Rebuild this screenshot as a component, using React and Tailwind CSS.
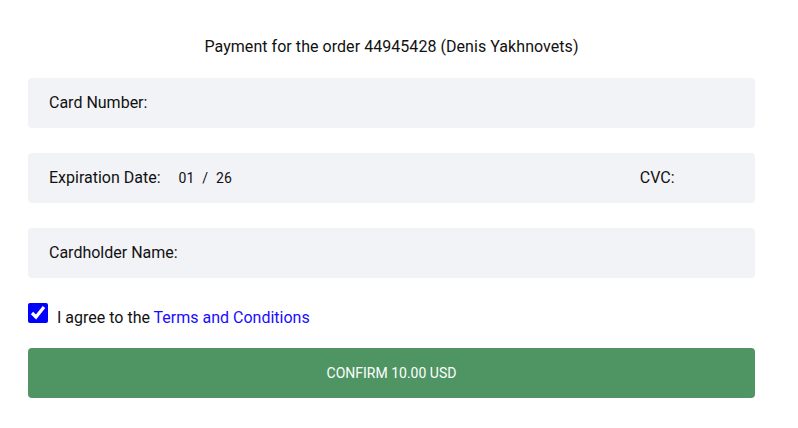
export default function App() {
  return (
    <div className="min-h-screen bg-white font-['Roboto',sans-serif] text-[#111]">
      <div className="ml-[28px] w-[727px] pt-[36px]">
        {/* Title */}
        <h1 className="text-center text-base leading-[22px] tracking-[0.05px]">
          Payment for the order 44945428 (Denis Yakhnovets)
        </h1>

        {/* Fields */}
        <div className="mt-[20px] flex flex-col gap-[25px]">
          <div className="flex h-[50px] items-center rounded bg-[#f2f3f7] pl-[21px] text-base">
            Card Number:
          </div>
          <div className="flex h-[50px] items-center rounded bg-[#f2f3f7] pl-[21px] text-base">
            <span>Expiration Date:</span>
            <span className="ml-[18px] text-sm">01</span>
            <span className="ml-[8px] text-sm">/</span>
            <span className="ml-[8px] text-sm">26</span>
            <span className="ml-[408px]">CVC:</span>
          </div>
          <div className="flex h-[50px] items-center rounded bg-[#f2f3f7] pl-[21px] text-base">
            Cardholder Name:
          </div>
        </div>

        {/* Terms */}
        <label className="mt-[25px] flex items-start text-base">
          <input
            type="checkbox"
            defaultChecked
            className="m-0 h-5 w-5 accent-[#0000ff]"
          />
          <span className="ml-[9px] mt-[3px] leading-[24px]">
            I agree to the{" "}
            <a href="#" className="text-[#1a0dff]">
              Terms and Conditions
            </a>
          </span>
        </label>

        {/* Button */}
        <button className="mt-[18px] flex h-[50px] w-full items-center justify-center rounded bg-[#4e9563] text-sm uppercase text-white">
          Confirm 10.00 USD
        </button>
      </div>
    </div>
  );
}
